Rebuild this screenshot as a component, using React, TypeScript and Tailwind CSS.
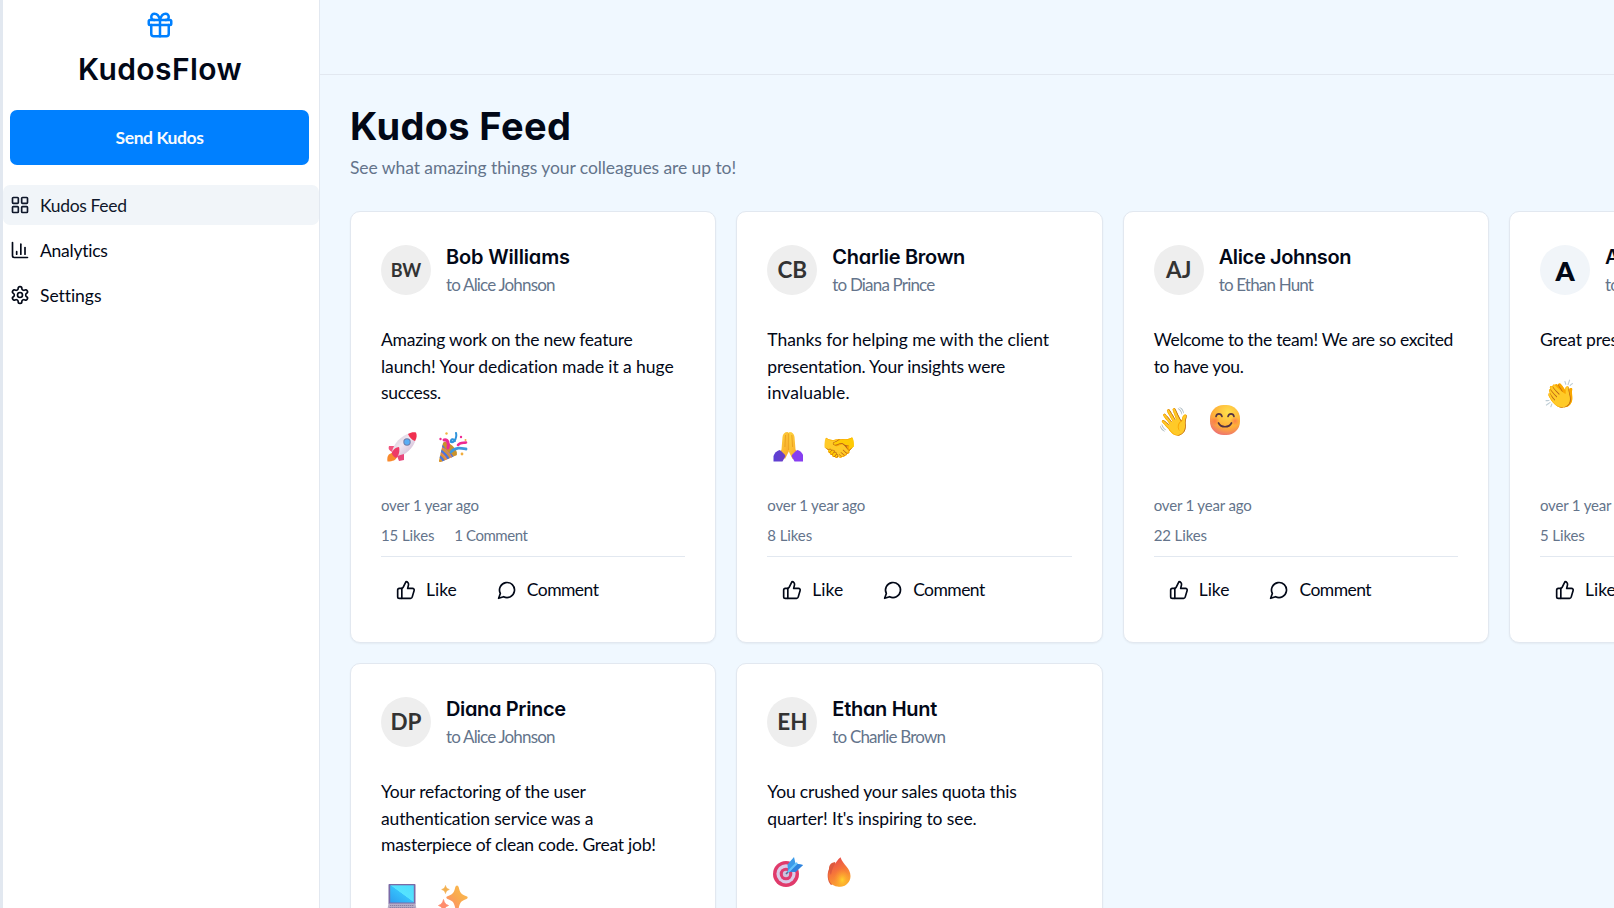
import type { ReactNode } from "react";
import { ChartColumn, Gift, LayoutGrid, ThumbsUp } from "lucide-react";

const body = "font-['Lato','PT_Sans',sans-serif]";
const heading = "font-['Inter','Poppins',sans-serif] [font-feature-settings:'cv11']";

function SettingsIcon({ className }: { className?: string }) {
  return (
    <svg viewBox="0 0 24 24" fill="none" stroke="currentColor" strokeWidth="2" strokeLinecap="round" strokeLinejoin="round" className={className}>
      <path d="M12.22 2h-.44a2 2 0 0 0-2 2v.18a2 2 0 0 1-1 1.73l-.43.25a2 2 0 0 1-2 0l-.15-.08a2 2 0 0 0-2.73.73l-.22.38a2 2 0 0 0 .73 2.73l.15.1a2 2 0 0 1 1 1.72v.51a2 2 0 0 1-1 1.74l-.15.09a2 2 0 0 0-.73 2.73l.22.38a2 2 0 0 0 2.73.73l.15-.08a2 2 0 0 1 2 0l.43.25a2 2 0 0 1 1 1.73V20a2 2 0 0 0 2 2h.44a2 2 0 0 0 2-2v-.18a2 2 0 0 1 1-1.73l.43-.25a2 2 0 0 1 2 0l.15.08a2 2 0 0 0 2.73-.73l.22-.39a2 2 0 0 0-.73-2.73l-.15-.08a2 2 0 0 1-1-1.74v-.5a2 2 0 0 1 1-1.74l.15-.09a2 2 0 0 0 .73-2.73l-.22-.38a2 2 0 0 0-2.73-.73l-.15.08a2 2 0 0 1-2 0l-.43-.25a2 2 0 0 1-1-1.73V4a2 2 0 0 0-2-2z" />
      <circle cx="12" cy="12" r="3" />
    </svg>
  );
}

function CommentIcon({ className }: { className?: string }) {
  return (
    <svg viewBox="0 0 24 24" fill="none" stroke="currentColor" strokeWidth="2" strokeLinecap="round" strokeLinejoin="round" className={className}>
      <path d="M7.9 20A9 9 0 1 0 4 16.1L2 22Z" />
    </svg>
  );
}

/* Emoji drawings share a 30x30 box. */
const art: Record<string, ReactNode> = {
  rocket: (
    <>
      <defs>
        <linearGradient id="rk" x1="0" y1="0" x2="1" y2="1"><stop offset="0" stopColor="#c9bfce" /><stop offset=".45" stopColor="#f1e8f2" /><stop offset="1" stopColor="#c3a9c9" /></linearGradient>
      </defs>
      <path d="M.5 29.500C-.5 24 2 21 6 21l4 4c-1 3-4 4.500-9.500 4.500Z" fill="#f98a2c" />
      <path d="M2 14h6l2 3-5 3c-3-2-4-3-3-6Z" fill="#f2557f" />
      <path d="M5 20C6 12 15 3 22 1.500L28.500 8C27 15 18 24 10 25Z" fill="url(#rk)" />
      <path d="M21 2c3-2 6-2 8-1.500C30 3 30 6 28 9c-3-1-6-4-7-7Z" fill="#f0304f" />
      <path d="M17 22v6l-5 1-2-5Z" fill="#e8477c" />
      <path d="M5 20c1-2 4-5 7-5 1 3 0 9-3 11-2-1-5-4-4-6Z" fill="#ee3a66" />
      <circle cx="20" cy="10" r="3.700" fill="#6e7ba8" /><circle cx="20" cy="10" r="2.700" fill="#58adf5" />
    </>
  ),
  party: (
    <>
      <defs><clipPath id="cone"><path d="M1 28.500 5 11c5 1 12 7 14 12L3 30C1 30 .7 29.500 1 28.500Z" /></clipPath></defs>
      <g clipPath="url(#cone)">
        <path d="M0 8h22v22H0Z" fill="#d9962f" />
        <path d="M3 13c4 3 9 8 12 13M2 18c3 2 7 5 9 10M1 24c2 1 4 3 5 6" fill="none" stroke="#4e74d8" strokeWidth="2.400" />
        <path d="M1 20c4 2 7 6 8 9M3 15c4 2 9 7 11 11" fill="none" stroke="#e88363" strokeWidth="1.200" />
      </g>
      <ellipse cx="12" cy="16.500" rx="9" ry="3.600" transform="rotate(43 12 16.500)" fill="#c8922c" />
      <path d="M6 8c4-1 5 4 4 8" fill="none" stroke="#ee2a91" strokeWidth="3" strokeLinecap="round" />
      <path d="M18 1c1 4-1 10-5 9-1-3 3-4 4-1" fill="none" stroke="#2f93dc" strokeWidth="2" strokeLinecap="round" />
      <path d="M20 13c2-3 5-2 8-2.500" fill="none" stroke="#ee2a91" strokeWidth="2.600" strokeLinecap="round" />
      <path d="M13 20c4-5 9-4 15-3" fill="none" stroke="#3f97dc" strokeWidth="2.800" strokeLinecap="round" />
      <circle cx="8.500" cy="1.500" r="1.200" fill="#f3b33f" /><circle cx="2.500" cy="7" r="1.200" fill="#ee2a91" /><circle cx="23" cy="5" r="1.200" fill="#ee2a91" /><circle cx="27.500" cy="8" r="1" fill="#f3b33f" /><circle cx="24" cy="22" r="1.400" fill="#f0ad3e" />
    </>
  ),
  pray: (
    <g transform="translate(1 0)">
      <defs>
        <linearGradient id="pr" x1="0" y1="0" x2="1" y2="1"><stop offset="0" stopColor="#ffd53d" /><stop offset="1" stopColor="#f8a52a" /></linearGradient>
        <linearGradient id="sl" x1="0" y1="0" x2="1" y2="0"><stop offset="0" stopColor="#5b3fd6" /><stop offset="1" stopColor="#6e3fc4" /></linearGradient>
      </defs>
      <path d="M7.500 17.500 8.500 5c.3-3 2-5 5-5l1.500 1v18l-4 8-6-6Z" fill="url(#pr)" />
      <path d="M21.500 17.500 20.500 5c-.3-3-2-5-5-5L14.500 1v18l4 8 6-6Z" fill="url(#pr)" />
      <path d="M14.700 1.500V18M11.500 3l-.6 12M17.800 3l.8 12" fill="none" stroke="#e59a1c" strokeWidth=".8" />
      <path d="M-.5 24c1-3 3-5 6-6 2 1 5 4 6 6l-3 5.500h-9Z" fill="url(#sl)" />
      <path d="M29.500 24c-1-3-3-5-6-6-2 1-5 4-6 6l3 5.500h9Z" fill="#873ff0" />
    </g>
  ),
  smile: (
    <>
      <defs>
        <radialGradient id="sm" cx=".6" cy=".25" r=".85"><stop offset="0" stopColor="#ffe04c" /><stop offset=".6" stopColor="#ffae38" /><stop offset="1" stopColor="#e9637f" /></radialGradient>
        <radialGradient id="ck"><stop offset="0" stopColor="#fb5a4e" stopOpacity=".6" /><stop offset="1" stopColor="#fb5a4e" stopOpacity="0" /></radialGradient>
      </defs>
      <rect x="0" y="0" width="30" height="30" rx="13.500" fill="url(#sm)" />
      <circle cx="5" cy="16" r="4.500" fill="url(#ck)" /><circle cx="25" cy="16" r="4.500" fill="url(#ck)" />
      <path d="M6 11.500c.8-3.500 5-3.500 6 0M18 11.500c1-3.500 5.200-3.500 6 0" fill="none" stroke="#523044" strokeWidth="1.600" strokeLinecap="round" />
      <path d="M8.500 18c2.500 5 10.500 5 13 0" fill="none" stroke="#523044" strokeWidth="1.700" strokeLinecap="round" />
    </>
  ),
  laptop: (
    <>
      <defs><linearGradient id="lp" x1="0" y1="1" x2="1" y2="0"><stop offset="0" stopColor="#2d9ff0" /><stop offset=".5" stopColor="#35c0fb" /><stop offset=".52" stopColor="#55e3ff" /><stop offset="1" stopColor="#4fdcfd" /></linearGradient></defs>
      <path d="M2.500 0h25c.6 0 1 .4 1 1v19h-27V1c0-.6.400-1 1-1Z" fill="#7b6aa6" />
      <path d="M3.200 1.300h23.600V18.500H3.200Z" fill="url(#lp)" />
      <path d="M1.500 19.500h27L30 28c0 1-.5 1.500-1.500 1.500h-27C.5 29.500 0 29 0 28Z" fill="#b7aec6" />
      <path d="M3 21.500h24M2.600 23.500h24.800" stroke="#8b80a5" strokeWidth="1.100" strokeDasharray="1.300 .7" />
    </>
  ),
  sparkles: (
    <>
      <defs><linearGradient id="sp" x1="0" y1="1" x2="1" y2="0"><stop offset="0" stopColor="#ff8574" /><stop offset=".5" stopColor="#f9a950" /><stop offset="1" stopColor="#fbc04e" /></linearGradient></defs>
      <path d="M19 1.500c1 0 1.500 1 1.800 2 1.200 5 2.200 7 7.700 8.800 1.600.6 1.600 2 0 2.600-5.500 1.800-6.500 3.500-7.700 8.800-.6 2.400-3 2.400-3.600 0-1.200-5.300-2.200-7-7.700-8.800-1.600-.6-1.600-2 0-2.600 5.500-1.800 6.500-3.800 7.700-8.800.3-1 .8-2 1.800-2Z" fill="url(#sp)" />
      <path d="M7.500 1.500c.7 2.500 1.200 3 3.800 4-2.600 1-3.100 1.500-3.800 4-.7-2.500-1.200-3-3.800-4 2.600-1 3.100-1.500 3.800-4Z" fill="#f3b050" stroke="#f3b050" strokeWidth=".6" strokeLinejoin="round" />
      <path d="M5.500 15.500c1 3.500 1.500 4.500 5 6-3.500 1.500-4 2.500-5 6-1-3.500-1.500-4.500-5-6 3.500-1.500 4-2.500 5-6Z" fill="#ff8c6c" stroke="#ff8c6c" strokeWidth=".8" strokeLinejoin="round" />
    </>
  ),
  target: (
    <>
      <circle cx="13" cy="17" r="13" fill="#e03a6b" /><circle cx="13" cy="16.800" r="9.600" fill="#d9cbe8" /><circle cx="13" cy="17" r="6.300" fill="#df3c70" /><circle cx="13" cy="17" r="3.200" fill="#cfc3dd" />
      <path d="m13 17 9-9" stroke="#4f6f95" strokeWidth="1.600" />
      <path d="m15 14.500-.5-7L21 0l1.500 6.500 7.500 1.500L22.500 15Z" fill="#3c9be9" />
      <path d="m15 14.500 7.500-8L30 8l-7.500 7Z" fill="#2f82dd" />
      <path d="m15.500 14.500 8-8" stroke="#63c3fb" strokeWidth="2.200" strokeLinecap="round" />
    </>
  ),
  fire: (
    <>
      <defs>
        <linearGradient id="fr" x1=".3" y1="0" x2=".7" y2="1"><stop offset="0" stopColor="#e7484c" /><stop offset=".5" stopColor="#f77a38" /><stop offset="1" stopColor="#fbb02f" /></linearGradient>
        <radialGradient id="fg" cx=".6" cy=".7" r=".55"><stop offset="0" stopColor="#ffd22e" /><stop offset="1" stopColor="#ff9a2c" stopOpacity="0" /></radialGradient>
      </defs>
      <g transform="translate(1 0)">
        <path d="M10 5C5 6 4 9 4 12 2 16 2 24 6 28l8-4Z" fill="#dd5a3d" />
        <path d="M15.500.3C10 5 7 12 6 18c-1-2-1.500-3-2-4.500C2 20 4 29.500 14 29.800 21 30 25.500 25 25.500 19 25.500 11 18 8 15.500.3Z" fill="url(#fr)" />
        <path d="M15.500 8C11 14 7 18 8 23c1 4 4 6.800 8 6.500 5-.4 8-4 7.500-9C23 16 18 13 15.500 8Z" fill="url(#fg)" />
      </g>
    </>
  ),
};

function Emoji({ name }: { name: string }) {
  return (
    <span className="flex h-[41px] w-[41px] items-center justify-center">
      {art[name] ? (
        <svg viewBox="0 0 30 30" className="h-[30px] w-[30px]">{art[name]}</svg>
      ) : (
        <span className="text-[27.500px] leading-none">{name}</span>
      )}
    </span>
  );
}

type Line = [text: string, tracking: string];

interface Kudos {
  initials: string;
  avatar: string;
  from: Line;
  to: string;
  lines: Line[];
  emojis: string[];
  likes: string;
  comments?: string;
}

const imageAvatar = "bg-[#eeeeee] text-[#333333] font-bold text-[22.500px]";

const feed: Kudos[] = [
  {
    initials: "BW",
    avatar: "bg-[#eeeeee] text-[#333333] font-bold text-[18px]",
    from: ["Bob Williams", "tracking-[-0.15px]"],
    to: "to Alice Johnson",
    lines: [
      ["Amazing work on the new feature", "tracking-[-0.24px]"],
      ["launch! Your dedication made it a huge", "tracking-[-0.070px]"],
      ["success.", "tracking-[-0.3px]"],
    ],
    emojis: ["rocket", "party"],
    likes: "15 Likes",
    comments: "1 Comment",
  },
  {
    initials: "CB",
    avatar: imageAvatar,
    from: ["Charlie Brown", "tracking-[-0.3px]"],
    to: "to Diana Prince",
    lines: [
      ["Thanks for helping me with the client", "tracking-[-0.060px]"],
      ["presentation. Your insights were", "tracking-[-0.2px]"],
      ["invaluable.", "tracking-[0.1px]"],
    ],
    emojis: ["pray", "🤝"],
    likes: "8 Likes",
  },
  {
    initials: "AJ",
    avatar: imageAvatar,
    from: ["Alice Johnson", "tracking-[-0.36px]"],
    to: "to Ethan Hunt",
    lines: [
      ["Welcome to the team! We are so excited", "tracking-[-0.31px]"],
      ["to have you.", "tracking-[-0.3px]"],
    ],
    emojis: ["👋", "smile"],
    likes: "22 Likes",
  },
  {
    initials: "A",
    avatar: "bg-[#f1f5f9] text-[#020817] font-extrabold text-[27px]",
    from: ["Alex", "tracking-[-0.36px]"],
    to: "to Bob Williams",
    lines: [["Great presentation today!", "tracking-[-0.2px]"]],
    emojis: ["👏"],
    likes: "5 Likes",
  },
  {
    initials: "DP",
    avatar: imageAvatar,
    from: ["Diana Prince", "tracking-[-0.35px]"],
    to: "to Alice Johnson",
    lines: [
      ["Your refactoring of the user", "tracking-[-0.2px]"],
      ["authentication service was a", "tracking-[-0.15px]"],
      ["masterpiece of clean code. Great job!", "tracking-[-0.25px]"],
    ],
    emojis: ["laptop", "sparkles"],
    likes: "12 Likes",
  },
  {
    initials: "EH",
    avatar: imageAvatar,
    from: ["Ethan Hunt", "tracking-[-0.3px]"],
    to: "to Charlie Brown",
    lines: [
      ["You crushed your sales quota this", "tracking-[-0.18px]"],
      ["quarter! It's inspiring to see.", "tracking-[-0.1px]"],
    ],
    emojis: ["target", "fire"],
    likes: "18 Likes",
  },
];

function KudosCard({ item }: { item: Kudos }) {
  return (
    <article className="flex h-[432px] flex-col rounded-[10px] border border-[#e2e8f0] bg-white p-[30px] shadow-[0_1px_2px_0_rgba(0,0,0,0.05)]">
      <header className="flex h-[57px] items-center gap-[15px]">
        <div className={`mb-px flex h-[50px] w-[50px] shrink-0 items-center justify-center rounded-full leading-none ${item.avatar}`}>
          {item.initials}
        </div>
        <div className="whitespace-nowrap">
          <h2 className={`${heading} text-[20px] leading-[28px] font-semibold ${item.from[1]}`}>{item.from[0]}</h2>
          <p className="text-[17px] leading-[27px] tracking-[-0.82px] text-[#64748b]">{item.to}</p>
        </div>
      </header>
      <p className="mt-[28px] whitespace-nowrap">
        {item.lines.map(([text, tracking]) => (
          <span key={text} className={`block leading-[26.25px] ${tracking}`}>{text}</span>
        ))}
      </p>
      <div className="mt-[20px] flex gap-[10px]">
        {item.emojis.map((name) => <Emoji key={name} name={name} />)}
      </div>
      <footer className="mt-auto">
        <div className="flex flex-col gap-[7.500px] text-[15px] leading-[22.500px] tracking-[-0.17px] text-[#64748b]">
          <p>over 1 year ago</p>
          <p className="flex gap-[20px]">
            <span className="tracking-[-0.1px]">{item.likes}</span>
            {item.comments && <span className="tracking-[-0.45px]">{item.comments}</span>}
          </p>
        </div>
        <div className="mt-[10px] flex gap-[10px] border-t border-[#e2e8f0] pt-[10px]">
          <button className="flex h-[45px] items-center gap-[10px] px-[15px]">
            <ThumbsUp className="h-5 w-5" />
            <span>Like</span>
          </button>
          <button className="flex h-[45px] items-center gap-[10px] px-[15px]">
            <CommentIcon className="h-5 w-5" />
            <span className="tracking-[-0.55px]">Comment</span>
          </button>
        </div>
      </footer>
    </article>
  );
}

const menu = [
  { label: "Kudos Feed", icon: LayoutGrid, active: true, tracking: "tracking-[-0.35px]" },
  { label: "Analytics", icon: ChartColumn, active: false, tracking: "tracking-[-0.25px]" },
  { label: "Settings", icon: SettingsIcon, active: false, tracking: "tracking-[-0.050px]" },
];

export default function App() {
  return (
    <div className={`${body} flex h-[908px] w-[1614px] overflow-hidden bg-[#f0f8ff] text-[17.500px] leading-[26.25px] text-[#020817]`}>
      <aside className="flex w-[320px] shrink-0 flex-col border-r border-l-[3px] border-r-[#e2e8f0] border-l-[#e2e8f0] bg-white">
        <div className="flex flex-col items-center gap-[10px] pt-[10px] pr-[2px]">
          <Gift className="h-[30px] w-[30px] text-[#0080ff]" />
          <h1 className={`${heading} text-[30px] leading-[39.500px] font-semibold tracking-[0.4px]`}>KudosFlow</h1>
        </div>
        <div className="pt-[20.500px] pr-[10px] pl-[7px]">
          <button className="h-[55px] w-full rounded-[7px] bg-[#0080ff] pt-[2px] font-bold tracking-[-0.42px] text-[#f8fafc]">Send Kudos</button>
        </div>
        <nav className="mt-[20px] flex flex-col gap-[5px]">
          {menu.map(({ label, icon: Icon, active, tracking }) => (
            <a key={label} className={`flex h-[40px] items-center gap-[10px] rounded-[7px] pl-[7px] ${active ? "bg-[#f1f5f9] text-[#0f172a]" : ""}`}>
              <Icon className="h-5 w-5" />
              <span className={`pt-[2px] ${tracking}`}>{label}</span>
            </a>
          ))}
        </nav>
      </aside>
      <div className="flex min-w-0 flex-1 flex-col overflow-hidden">
        <header className="h-[75px] shrink-0 border-b border-[#e2e8f0]" />
        <main className="px-[30px] pt-[30px]">
          <h1 className={`${heading} text-[38px] leading-[43px] font-bold tracking-[0.35px]`}>Kudos Feed</h1>
          <p className="mt-[7px] mb-[30px] tracking-[-0.070px] text-[#64748b]">See what amazing things your colleagues are up to!</p>
          <div className="grid grid-cols-[repeat(4,366.33px)] gap-[20px]">
            {feed.map((item) => <KudosCard key={item.initials} item={item} />)}
          </div>
        </main>
      </div>
    </div>
  );
}
